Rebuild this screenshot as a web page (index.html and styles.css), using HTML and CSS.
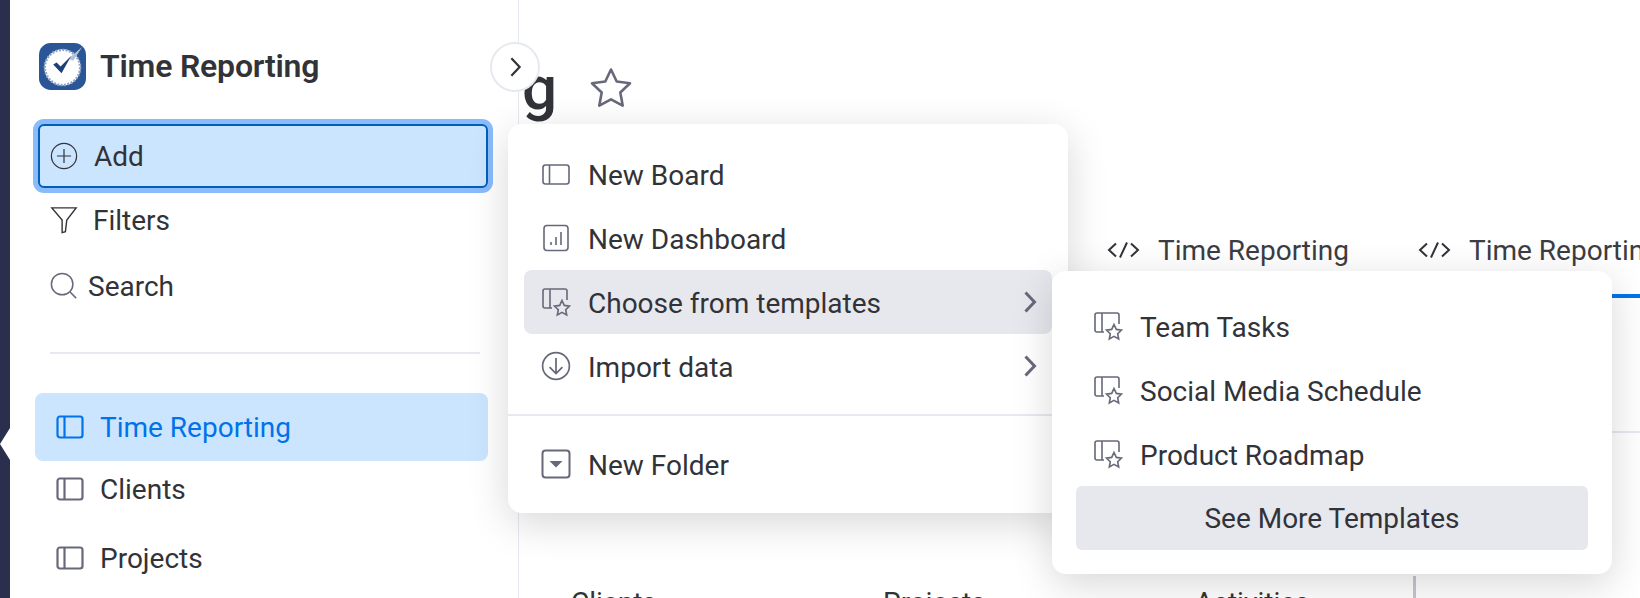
FILE: index.html
```html
<!DOCTYPE html>
<html lang="en">
<head>
<meta charset="utf-8">
<title>Time Reporting</title>
<link rel="stylesheet" href="styles.css">
</head>
<body>
<svg class="defs" width="0" height="0" aria-hidden="true">
  <defs>
    <symbol id="i-board" viewBox="0 0 28 24"><rect x="1.5" y="1.5" width="25" height="21" rx="2.5"/><path d="M8.5 1.5v21"/></symbol>
    <symbol id="i-board-wide" viewBox="0 0 28 21"><rect x="1" y="1" width="26" height="19" rx="2.5"/><path d="M7.500 1v19"/></symbol>
    <symbol id="i-tpl" viewBox="0 0 30 30"><path d="M11 21H4a2 2 0 0 1-2-2V4a2 2 0 0 1 2-2h20a2 2 0 0 1 2 2v9"/><path d="M9 2v19"/><path d="M21 13.5l2.3 4.9 5.2.7-3.8 3.6 1 5.3-4.7-2.6-4.7 2.6 1-5.3-3.8-3.6 5.2-.7z"/></symbol>
    <symbol id="i-chev" viewBox="0 0 14 24"><path d="M2.5 2.5L11.5 12l-9 9.5"/></symbol>
    <symbol id="i-code" viewBox="0 0 33 16"><path d="M9 1.500L2 8l7 6.500M24 1.500L31 8l-7 6.500M20 .5l-7 15"/></symbol>
  </defs>
</svg>
<div class="app">
  <div class="rail"></div>
  <aside class="sidebar">
    <div class="brand">
      <svg class="logo" viewBox="0 0 48 48" aria-hidden="true">
        <rect width="48" height="48" rx="12" fill="#2a5596"/>
        <circle cx="24" cy="25" r="18.500" fill="#fff"/>
        <circle cx="24" cy="25" r="18" class="logo-rim"/>
        <path class="logo-hand" d="M30 16L44 4l-9 14z"/>
        <path class="logo-check" d="M14.500 22l3.500-2 4 4 11-11-10 18z"/>
      </svg>
      <span class="brand-name">Time Reporting</span>
    </div>
    <div class="add">
      <svg class="ic ic-add" viewBox="0 0 30 30"><circle cx="15" cy="15" r="13.5"/><path d="M15 7.5v15M7.5 15h15"/></svg>
      <span>Add</span>
    </div>
    <div class="tool tool-filter">
      <svg class="ic ic-filter" viewBox="0 0 30 30"><path d="M2 2h26L18 15L16.500 27.500 13 28.500V15z" /></svg>
      <span>Filters</span>
    </div>
    <div class="tool tool-search">
      <svg class="ic ic-search" viewBox="0 0 30 30"><circle cx="13" cy="13" r="11.500"/><path d="M21.500 21.500L28 28"/></svg>
      <span>Search</span>
    </div>
    <hr class="side-rule">
    <nav class="boards">
      <div class="board board-active"><svg class="ic-board"><use href="#i-board"/></svg><span>Time Reporting</span></div>
      <div class="board board-clients"><svg class="ic-board"><use href="#i-board"/></svg><span>Clients</span></div>
      <div class="board board-projects"><svg class="ic-board"><use href="#i-board"/></svg><span>Projects</span></div>
    </nav>
  </aside>
  <button class="toggle" aria-label="Collapse"><svg class="ic-toggle" viewBox="0 0 14 24"><path d="M2.500 2.500L11.500 12l-9 9.500"/></svg></button>
  <main class="main">
    <div class="title-row">
      <h1 class="title">g</h1>
      <svg class="star" viewBox="0 0 44 44"><path d="M22 3.500l5.700 12 13.300 1.800-9.700 9.200 2.400 13.100L22 33.300 10.300 39.600l2.400-13.100-9.700-9.200 13.300-1.800z"/></svg>
    </div>
    <div class="tabs">
      <div class="tab"><svg class="code"><use href="#i-code"/></svg><span>Time Reporting</span></div>
      <div class="tab tab-on"><svg class="code"><use href="#i-code"/></svg><span>Time Reporting</span></div>
    </div>
    <div class="panel">
      <div class="cols">
        <span class="col">Clients</span>
        <span class="col">Projects</span>
        <span class="col col-last">Activities</span>
      </div>
    </div>
  </main>
  <div class="menu">
    <div class="item"><span class="slot"><svg class="ic-m ic-mboard"><use href="#i-board-wide"/></svg></span><span>New Board</span></div>
    <div class="item"><span class="slot"><svg class="ic-m ic-dash" viewBox="0 0 28 28"><rect x="2" y="1.500" width="24" height="25" rx="3"/><path d="M9 21v-3M14 21v-8M19 21V8"/></svg></span><span>New Dashboard</span></div>
    <div class="item item-on"><span class="slot"><svg class="ic-m"><use href="#i-tpl"/></svg></span><span>Choose from templates</span><svg class="chev"><use href="#i-chev"/></svg></div>
    <div class="item"><span class="slot"><svg class="ic-m" viewBox="0 0 28 28"><circle cx="14" cy="14" r="12.500"/><path d="M14 6.500v14M8 15l6 6 6-6"/></svg></span><span>Import data</span><svg class="chev"><use href="#i-chev"/></svg></div>
    <hr class="menu-rule">
    <div class="item"><span class="slot"><svg class="ic-m ic-folder" viewBox="0 0 30 30"><rect x="1.500" y="1.500" width="27" height="27" rx="3"/><path class="fill" d="M8.500 12h13l-6.500 6.500z"/></svg></span><span>New Folder</span></div>
  </div>
  <div class="submenu">
    <div class="item sub-item"><span class="slot"><svg class="ic-m"><use href="#i-tpl"/></svg></span><span>Team Tasks</span></div>
    <div class="item sub-item"><span class="slot"><svg class="ic-m"><use href="#i-tpl"/></svg></span><span>Social Media Schedule</span></div>
    <div class="item sub-item"><span class="slot"><svg class="ic-m"><use href="#i-tpl"/></svg></span><span>Product Roadmap</span></div>
    <div class="more"><span>See More Templates</span></div>
  </div>
</div>
</body>
</html>
```
FILE: styles.css
```css
* { box-sizing: border-box; }
html, body { margin: 0; padding: 0; background: #fff; }
body { font-family: Roboto, "Liberation Sans", sans-serif; color: #323338; font-size: 28px; }
.defs { position: absolute; }
svg { fill: none; stroke: #676879; stroke-width: 2; display: block; }
.app { position: relative; display: flex; width: 1640px; height: 598px; overflow: hidden; }

.rail { position: relative; flex: none; width: 10px; background: #292f4c; }
.rail::after { content: ""; position: absolute; left: 0; top: 428px; width: 10px; height: 32px; background: #fff; clip-path: polygon(0 50%, 100% 0, 100% 100%); }

.sidebar { position: relative; z-index: 1; flex: none; width: 509px; background: #fff; border-right: 1px solid #e6e9ef; padding: 43px 30px 0 29px; }
.brand { display: flex; align-items: center; gap: 14px; height: 46px; margin-bottom: 35px; }
.logo { width: 47px; height: 47px; stroke: none; flex: none; }
.logo-rim { stroke: #8fa3c4; stroke-width: 2.500; stroke-dasharray: 2 1.500; }
.logo-hand { fill: #b4c1d6; stroke: none; }
.logo-check { fill: #1d3f7c; stroke: none; }
.brand-name { font-size: 32px; font-weight: 600; letter-spacing: -0.2px; }
.add { display: flex; align-items: center; gap: 16px; width: 450px; height: 64px; margin-left: -1px; padding-left: 10px; background: #cce5ff; border: 2px solid #0060b9; border-radius: 6px; box-shadow: 0 0 0 5px #8abbfb; }
.ic-add { width: 28px; height: 28px; stroke: #323338; stroke-width: 1.3; }
.tool { display: flex; align-items: center; height: 64px; padding-left: 11px; }
.ic-filter { width: 28px; height: 30px; margin-right: 15px; stroke: #323338; stroke-width: 1.5; }
.ic-search { width: 28px; height: 30px; margin-right: 10px; stroke-width: 1.6; }
.tool-search { margin-top: 2px; }
.side-rule { width: 430px; height: 2px; margin: 34px 0 39px 11px; border: 0; background: #e6e9ef; }
.board { display: flex; align-items: center; gap: 16px; padding-left: 21px; height: 68px; width: 453px; margin-left: -4px; border-radius: 8px; }
.ic-board { width: 28px; height: 24px; flex: none; stroke-width: 2.200; }
.board-active { background: #cce5ff; color: #0073ea; }
.board-active .ic-board { stroke: #0073ea; }
.board-clients { height: 56px; }
.board-projects { margin-top: 7px; }

.toggle { position: absolute; z-index: 2; left: 490px; top: 42px; width: 50px; height: 50px; padding: 0; display: flex; align-items: center; justify-content: center; background: #fff; border: 2px solid #e6e9ef; border-radius: 50%; }
.ic-toggle { width: 13px; height: 22px; stroke: #323338; stroke-width: 2.400; }

.main { flex: 1; min-width: 0; overflow: hidden; }
.title-row { display: flex; align-items: center; gap: 32px; height: 76px; margin-top: 50px; padding-left: 3px; }
.title { margin: 0; font-size: 62px; font-weight: 500; line-height: 60px; }
.star { width: 44px; height: 44px; stroke-width: 2.600; stroke-linejoin: round; }
.tabs { display: flex; height: 68px; margin-top: 104px; padding-left: 572px; white-space: nowrap; }
.tab { display: flex; gap: 18px; height: 68px; padding: 4px 0 0 16px; margin-right: 53px; color: #3c3d42; }
.tab-on { flex: 1; border-bottom: 4px solid #0073ea; margin-right: -200px; }
.code { flex: none; width: 33px; height: 16px; margin-top: 8px; stroke: #323338; stroke-width: 2; }
.panel { margin-top: 133px; border-top: 2px solid #e6e9ef; height: 200px; }
.cols { display: flex; margin-top: 143px; padding-left: 52px; height: 60px; }
.col { width: 312px; padding-top: 10px; }
.col-last { width: 221px; border-right: 3px solid #c5c7d0; }

.menu, .submenu { position: absolute; z-index: 3; background: #fff; border-radius: 14px; box-shadow: 0 10px 40px rgba(0, 0, 0, .16); }
.menu { left: 508px; top: 124px; width: 560px; height: 389px; padding: 18px 16px 0; }
.submenu { left: 1052px; top: 271px; width: 560px; height: 303px; padding: 23px 24px 0; }
.item { display: flex; align-items: center; height: 64px; padding-left: 17px; border-radius: 8px; }
.item > span:not(.slot) { padding-top: 2px; }
.item-on { background: #e6e8ed; }
.slot { width: 30px; flex: none; margin-right: 17px; display: flex; justify-content: center; }
.ic-m { width: 30px; height: 30px; stroke-width: 1.600; }
.ic-mboard { width: 28px; height: 21px; }
.ic-dash { width: 28px; height: 28px; }
.ic-folder { width: 32px; height: 32px; stroke-width: 2; }
.ic-folder .fill { fill: #676879; stroke: none; }
.chev { width: 14px; height: 24px; margin-left: auto; margin-right: 15px; stroke-width: 3; }
.menu-rule { height: 2px; border: 0; margin: 16px -16px; background: #e6e9ef; }
.sub-item .slot { margin-right: 17px; }
.more { display: flex; align-items: center; justify-content: center; height: 64px; background: #e6e8ed; border-radius: 6px; }
```
